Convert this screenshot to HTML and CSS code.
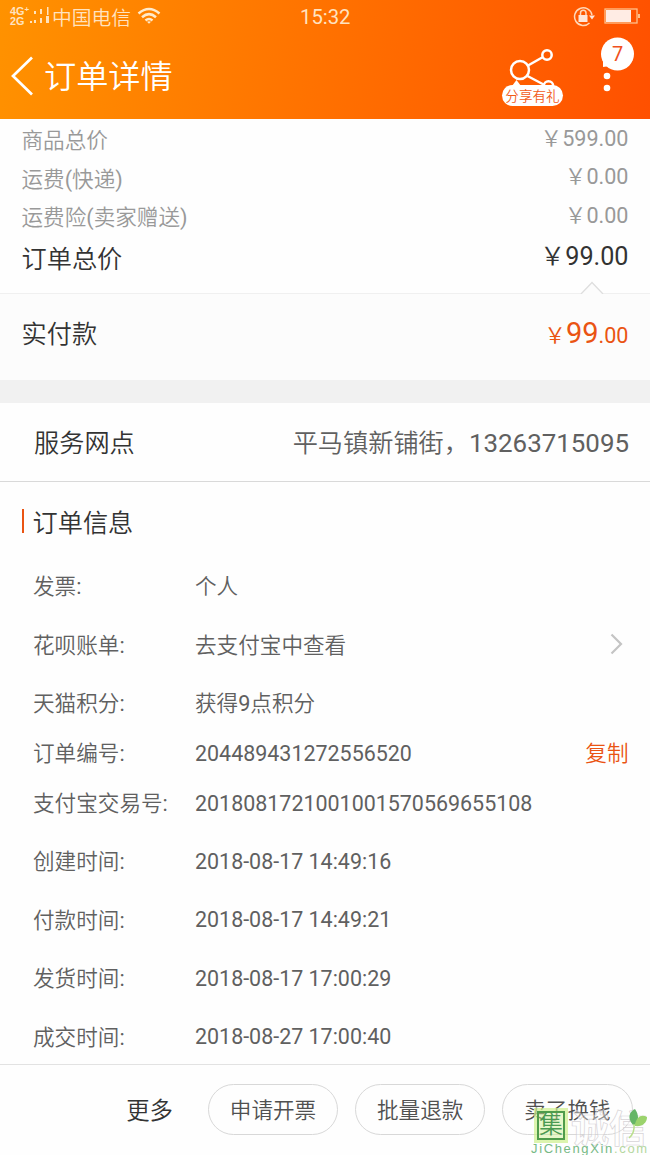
FILE: index.html
```
<!DOCTYPE html>
<html lang="zh-CN">
<head>
<meta charset="utf-8">
<title>订单详情</title>
<link rel="stylesheet" href="styles.css">
</head>
<body>
<div class="screen">
  <header class="top">
    <div class="status">
      <div class="net"><span>4G<sup>+</sup></span><span>2G</span></div>
      <svg class="bars" width="20" height="20" viewBox="0 0 20 20" fill="#ffe3bd"><path d="M4 5h2v3H4zM10 3h2v5h-2zM17 1h1.500v8H17zM0 15h2v2H0zM4 14h2v3H4zM10 12h2v5h-2zM16 10h3v7h-3z"/></svg>
      <span class="carrier">中国电信</span>
      <svg class="wifi" width="24" height="18" viewBox="0 0 24 18" fill="none" stroke="#ffeacb" stroke-width="2.500"><path d="M1.500 6.500Q12-2.500 22.500 6.500M5 10.200Q12 4 19 10.200M8.500 13.500Q12 10.500 15.500 13.500"/><path d="M10 14.800q2-1.200 4 0l-2 2z" fill="#ffeacb" stroke="none"/></svg>
      <span class="clock">15:32</span>
      <svg class="lock" width="24" height="22" viewBox="0 0 24 22" fill="none" stroke="#ffd8b8" stroke-width="1.500"><path d="M16.500 17A8.800 8.800 0 1 1 19 9"/><path d="M16 9.500h6l-3 4z" fill="#ffe6d8" stroke="none"/><path d="M7.500 9V7a2.700 2.700 0 0 1 5.500 0v2"/><path d="M5.500 9h9v7h-9z" fill="#ffe6d8" stroke="none"/></svg>
      <svg class="battery" width="37" height="17" viewBox="0 0 37 17"><rect x="1" y="1" width="32" height="14" fill="none" stroke="#ffc08a" stroke-width="1.300"/><path d="M2 2h25v12H2z" fill="#ffece4"/><path d="M34 6h2v4h-2z" fill="#ffc08a"/></svg>
    </div>
    <div class="nav">
      <svg class="back" width="24" height="40" viewBox="0 0 24 40" fill="none" stroke="#fff" stroke-width="2.700"><path d="M21 1.500L2 20l19 18.500"/></svg>
      <h1 class="title">订单详情</h1>
      <div class="share">
        <svg width="62" height="58" viewBox="0 0 62 58" fill="none" stroke="#fff" stroke-width="2.500"><circle cx="18" cy="22" r="9"/><circle cx="45" cy="7" r="4.700"/><circle cx="46.500" cy="38" r="4.700"/><path d="M26 17.500l15-8.500M25.500 28l17 9"/><path d="M10 38l4.500-6 4.500 6z" fill="#fff" stroke="none"/></svg>
        <span class="share-tag">分享有礼</span>
      </div>
      <div class="menu">
        <svg width="40" height="58" viewBox="0 0 40 58" fill="#fff"><circle cx="21.500" cy="17" r="16.500"/><path d="M7 24v6l7-1z"/><circle cx="11" cy="39" r="3.300"/><circle cx="11" cy="51" r="3.300"/></svg>
        <span class="badge">7</span>
      </div>
    </div>
  </header>

  <section class="summary">
    <div class="sum-row"><span>商品总价</span><span>￥599.00</span></div>
    <div class="sum-row"><span>运费(快递)</span><span>￥0.00</span></div>
    <div class="sum-row"><span>运费险(卖家赠送)</span><span>￥0.00</span></div>
    <div class="sum-row total"><span>订单总价</span><span>￥99.00</span></div>
    <svg class="notch" width="24" height="13" viewBox="0 0 24 13" fill="#fcfcfc" stroke="#dedede" stroke-width="1.300"><path d="M1 13L12 1.500 23 13"/></svg>
  </section>
  <section class="paid">
    <span>实付款</span>
    <span class="price">￥<b>99</b>.00</span>
  </section>

  <section class="service">
    <span class="service-name">服务网点</span>
    <span class="service-info">平马镇新铺街，<span class="phone">13263715095</span></span>
  </section>

  <section class="info">
    <h2 class="heading">订单信息</h2>
    <div class="row"><span class="label">发票:</span><span class="text">个人</span></div>
    <div class="row"><span class="label">花呗账单:</span><span class="text">去支付宝中查看</span>
      <svg class="chevron" width="13" height="22" viewBox="0 0 13 22" fill="none" stroke="#c4c4c4" stroke-width="2.200"><path d="M1.500 1.500L11 11 1.500 20.500"/></svg></div>
    <div class="row"><span class="label">天猫积分:</span><span class="text">获得9点积分</span></div>
    <div class="row tight"><span class="label">订单编号:</span><span class="num">204489431272556520</span><span class="copy">复制</span></div>
    <div class="row tight2"><span class="label">支付宝交易号:</span><span class="num">2018081721001001570569655108</span></div>
    <div class="row"><span class="label">创建时间:</span><span class="num">2018-08-17 14:49:16</span></div>
    <div class="row"><span class="label">付款时间:</span><span class="num">2018-08-17 14:49:21</span></div>
    <div class="row"><span class="label">发货时间:</span><span class="num">2018-08-17 17:00:29</span></div>
    <div class="row"><span class="label">成交时间:</span><span class="num">2018-08-27 17:00:40</span></div>
  </section>

  <footer class="actions">
    <span class="more">更多</span>
    <span class="btn">申请开票</span>
    <span class="btn">批量退款</span>
    <span class="btn">卖了换钱</span>
  </footer>

  <div class="mark">
    <div class="mark-row">
      <span class="mark-box">集</span><span class="mark-name">诚信</span>
      <svg class="leaf" width="22" height="34" viewBox="0 0 22 34"><path d="M6 17C0 10 2 4 8 1c4 6 4 11 0 16z" fill="#65b566"/><path d="M8 16C10 9 14 6 20 9c0 6-5 10-12 9z" fill="#9bd36c"/><path d="M7 16q1 9-5 14" fill="none" stroke="#b9df8b" stroke-width="1.500"/></svg>
    </div>
    <div class="mark-url"><span class="g1">JiChengXin</span><span class="g2">.com</span></div>
  </div>
</div>
</body>
</html>
```
FILE: styles.css
```
* { box-sizing: border-box; }
body {
  margin: 0;
  font-family: Roboto, "Noto Sans CJK SC DemiLight", "Noto Sans CJK SC", sans-serif;
  font-size: 21.6px;
  font-weight: 400;
  color: #606060;
  background: #fefefe;
}
h1, h2 { margin: 0; font-weight: 400; }
svg { display: block; flex: none; }
.screen {
  position: relative;
  width: 650px;
  height: 1155px;
  overflow: hidden;
  white-space: nowrap;
}

.top {
  height: 119px;
  background: linear-gradient(100deg, #ff9200 0%, #ff5000 100%);
  color: #fff;
}
.status {
  display: flex;
  align-items: center;
  height: 33px;
  padding: 0 9px 0 10px;
  color: #ffe3c0;
}
.net {
  display: flex;
  flex-direction: column;
  flex: none;
  width: 20px;
  margin-top: -1px;
  font: bold 10.800px/10px "Liberation Sans", sans-serif;
}
.net sup { font-size: 8px; line-height: 0; vertical-align: 3px; }
.bars { margin: -1px 2px 0 0; }
.carrier { width: 85px; font-size: 19.800px; }
.wifi { margin-top: -2px; }
.clock { margin-left: 139px; font-size: 20.300px; }
.lock { margin-left: auto; }
.battery { margin: 0 0 0 7px; }
.nav {
  display: flex;
  height: 86px;
  padding-left: 11px;
}
.back { margin-top: 23px; }
.title { margin: 19px 0 0 9px; font-size: 32.200px; line-height: 50px; }
.share { position: relative; margin: 15px 0 0 auto; width: 62px; }
.share-tag {
  position: absolute;
  left: 0;
  top: 37px;
  width: 61px;
  height: 21px;
  border-radius: 11px;
  background: #fff;
  color: #f25a18;
  font-size: 13.600px;
  line-height: 22px;
  text-align: center;
}
.menu { position: relative; width: 40px; margin: 4px 14px 0 32px; }
.badge {
  position: absolute;
  left: 5px;
  top: 1px;
  width: 33px;
  color: #f05020;
  font-size: 20px;
  line-height: 33px;
  text-align: center;
}

.summary {
  position: relative;
  height: 175px;
  padding: 3px 21.500px 0;
  border-bottom: 1px solid #f0f0f0;
  color: #999;
}
.sum-row {
  display: flex;
  justify-content: space-between;
  height: 38.500px;
  line-height: 38px;
}
.sum-row span:last-child { margin-top: -2.500px; }
.sum-row.total { height: 44px; line-height: 44px; font-size: 25.200px; color: #333; }
.notch { position: absolute; left: 580px; bottom: -1px; }
.paid {
  display: flex;
  justify-content: space-between;
  height: 86px;
  padding: 0 21.500px;
  background: #fcfcfc;
  color: #333;
  font-size: 25.200px;
  line-height: 82px;
}
.price { margin-top: -2px; color: #ea5413; font-size: 21.600px; }
.price b { font-size: 29px; font-weight: 400; }

.service {
  display: flex;
  justify-content: space-between;
  height: 102px;
  padding: 0 21px 0 34px;
  border-top: 23px solid #f1f1f1;
  border-bottom: 1px solid #d9d9d9;
  font-size: 25.200px;
  line-height: 80px;
}
.service-name { margin-top: 1px; color: #333; }
.phone { font-size: 25.900px; }

.info { height: 582px; padding: 0 21.500px; }
.heading {
  display: flex;
  align-items: center;
  height: 75px;
  padding-top: 2px;
  color: #333;
  font-size: 25.200px;
}
.heading::before {
  content: "";
  width: 2px;
  height: 24px;
  margin-right: 9px;
  background: #ea5413;
}
.row {
  display: flex;
  align-items: center;
  height: 58.400px;
  padding-left: 11.500px;
}
.label, .text, .copy { padding-bottom: 3px; }
.label { width: 162px; }
.num { font-size: 21.450px; }
.tight { height: 42px; }
.tight2 { height: 58px; }
.chevron { margin: -2px 6px 0 auto; }
.copy { margin-left: auto; color: #ea5413; }

.actions {
  display: flex;
  align-items: center;
  justify-content: flex-end;
  gap: 17px;
  height: 91px;
  padding: 0 17.500px 2px 0;
  border-top: 1px solid #e2e2e2;
}
.more { margin-right: 18px; color: #333; font-size: 23.400px; }
.btn {
  width: 130.200px;
  height: 51px;
  border: 1px solid #d8d8d8;
  border-radius: 26px;
  line-height: 51px;
  text-align: center;
  color: #505050;
}

.mark { position: absolute; left: 531px; top: 1108px; width: 119px; }
.mark-row { display: flex; align-items: center; height: 34px; padding-left: 6px; }
.mark-box {
  display: flex;
  justify-content: center;
  flex: none;
  width: 28px;
  height: 29px;
  border: 2px solid #4f9c4b;
  outline: 3px solid rgba(205, 240, 140, .7);
  background: rgba(205, 240, 140, .45);
  color: #4b9a52;
  font-size: 24px;
  line-height: 24px;
}
.mark-name {
  margin-left: 6px;
  color: rgba(255, 255, 255, .35);
  font-family: "Noto Sans CJK SC", sans-serif;
  font-size: 38px;
  font-weight: 700;
  line-height: 33px;
  -webkit-text-stroke: .7px rgba(205, 200, 205, .8);
}
.leaf { position: absolute; left: 96px; top: 0; }
.mark-url {
  font: 13px/14px "Liberation Sans", sans-serif;
  letter-spacing: 1.650px;
}
.g1 { color: #76b985; }
.g2 { color: #b5d8a0; }
```
